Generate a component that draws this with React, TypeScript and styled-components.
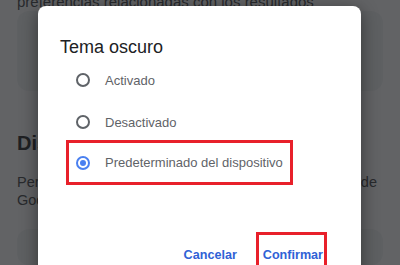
import styled, { createGlobalStyle } from "styled-components";

const GlobalStyle = createGlobalStyle`
  html, body {
    margin: 0;
    padding: 0;
    width: 400px;
    height: 265px;
    overflow: hidden;
    background: #ffffff;
  }
  * {
    box-sizing: border-box;
  }
`;

const options = [
  { id: "on", label: "Activado" },
  { id: "off", label: "Desactivado" },
  { id: "device", label: "Predeterminado del dispositivo" },
];

const Screen = styled.div`
  position: relative;
  width: 400px;
  height: 265px;
  overflow: hidden;
  font-family: "Liberation Sans", Arial, sans-serif;
`;

const Page = styled.div`
  display: flex;
  flex-direction: column;
  width: 100%;
  height: 100%;
  padding: 0 17px;
  background: #ffffff;
  color: #202124;
`;

const PageText = styled.p`
  margin: 0;
  font-size: 15px;
  line-height: 18px;
  color: #3c4043;
`;

const TopLine = styled(PageText)`
  margin-top: -7px;
`;

const Card = styled.div<{ $height: number; $gap?: number }>`
  height: ${(p) => p.$height}px;
  margin-top: ${(p) => p.$gap ?? 0}px;
  border-radius: 12px;
  background: #f1f3f4;
`;

const SectionTitle = styled.h2`
  margin: 40px 0 0;
  font-size: 20px;
  line-height: 24px;
  font-weight: 700;
  color: #202124;
`;

const SectionText = styled(PageText)`
  margin-top: 18px;
  padding-right: 6px;
  font-size: 14.5px;
  text-align: justify;
`;

const Scrim = styled.div`
  position: absolute;
  inset: 0;
  background: rgba(32, 33, 36, 0.7);
`;

const Dialog = styled.div`
  position: absolute;
  left: 38px;
  top: 6px;
  width: 323px;
  height: 300px;
  display: flex;
  flex-direction: column;
  padding: 30px 34px 0 22px;
  border-radius: 8px;
  background: #ffffff;
  box-shadow: 0 4px 18px rgba(0, 0, 0, 0.45);
`;

const Title = styled.h1`
  margin: 0;
  font-size: 18px;
  line-height: 23px;
  font-weight: 400;
  color: #202124;
`;

const Options = styled.div`
  display: flex;
  flex-direction: column;
`;

const Row = styled.label<{ $height: number }>`
  display: flex;
  align-items: center;
  gap: 15px;
  height: ${(p) => p.$height}px;
  padding-left: 16px;
`;

const Highlight = styled.div`
  margin: -3px 0 0 6px;
  width: 227px;
  border: 3px solid #e8202a;

  ${Row} {
    padding-left: 7px;
  }
`;

const Radio = styled.span<{ $checked: boolean }>`
  position: relative;
  flex: none;
  width: 14px;
  height: 14px;
  border-radius: 50%;
  border: 2px solid ${(p) => (p.$checked ? "#4a80f0" : "#5f6368")};

  &::after {
    content: "";
    display: ${(p) => (p.$checked ? "block" : "none")};
    position: absolute;
    inset: 2px;
    border-radius: 50%;
    background: #4a80f0;
  }
`;

const Label = styled.span`
  font-size: 13px;
  color: #5f6368;
  white-space: nowrap;
`;

const Footer = styled.div`
  display: flex;
  justify-content: flex-end;
  align-items: flex-end;
  gap: 19px;
  margin-top: 47px;
`;

const TextButton = styled.button`
  padding: 0;
  border: none;
  background: none;
  font-family: inherit;
  font-size: 12.6px;
  font-weight: 700;
  line-height: 16px;
  color: #2f62d6;
  cursor: pointer;
`;

const Marked = styled.div`
  display: flex;
  padding: 12px 1px 8px 4px;
  border: 3px solid #e8202a;
`;

const CancelWrap = styled.div`
  padding-bottom: 11px;
`;

export default function App() {
  const selected = "device";

  return (
    <Screen>
      <GlobalStyle />
      <Page>
        <TopLine>preferencias relacionadas con los resultados</TopLine>
        <Card $height={88} />
        <SectionTitle>Diseño</SectionTitle>
        <SectionText>
          Personaliza el aspecto de la búsqueda y las apps de Google
        </SectionText>
        <Card $height={40} $gap={20} />
      </Page>
      <Scrim />
      <Dialog role="dialog" aria-label="Tema oscuro">
        <Title>Tema oscuro</Title>
        <Options>
          {options.slice(0, 2).map((o) => (
            <Row key={o.id} $height={42}>
              <Radio $checked={selected === o.id} />
              <Label>{o.label}</Label>
            </Row>
          ))}
          <Highlight>
            <Row $height={39}>
              <Radio $checked={selected === options[2].id} />
              <Label>{options[2].label}</Label>
            </Row>
          </Highlight>
        </Options>
        <Footer>
          <CancelWrap>
            <TextButton>Cancelar</TextButton>
          </CancelWrap>
          <Marked>
            <TextButton>Confirmar</TextButton>
          </Marked>
        </Footer>
      </Dialog>
    </Screen>
  );
}
